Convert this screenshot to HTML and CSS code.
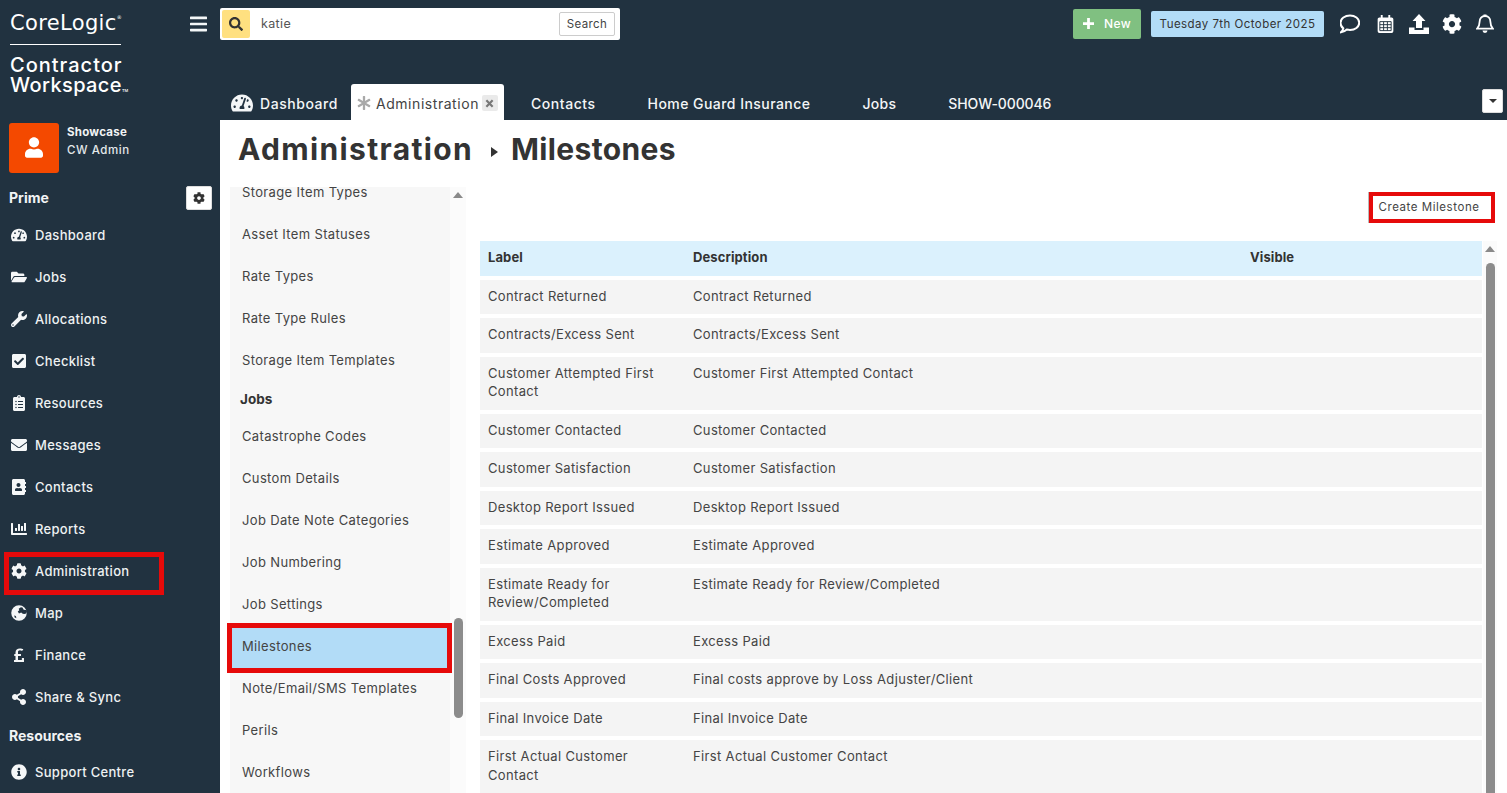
FILE: index.html
```html
<!DOCTYPE html>
<html lang="en">
<head>
<meta charset="utf-8">
<title>Administration - Milestones</title>
<link rel="stylesheet" href="styles.css">
</head>
<body>
<svg class="sprite" aria-hidden="true">
<symbol id="i-bars" viewBox="0 0 448 512"><path d="M16 132h416c8.837 0 16-7.163 16-16V76c0-8.837-7.163-16-16-16H16C7.163 60 0 67.163 0 76v40c0 8.837 7.163 16 16 16zm0 160h416c8.837 0 16-7.163 16-16v-40c0-8.837-7.163-16-16-16H16c-8.837 0-16 7.163-16 16v40c0 8.837 7.163 16 16 16zm0 160h416c8.837 0 16-7.163 16-16v-40c0-8.837-7.163-16-16-16H16c-8.837 0-16 7.163-16 16v40c0 8.837 7.163 16 16 16z"/></symbol>
<symbol id="i-search" viewBox="0 0 512 512"><path d="M505 442.7L405.3 343c-4.5-4.5-10.6-7-17-7H372c27.6-35.3 44-79.7 44-128C416 93.1 322.9 0 208 0S0 93.1 0 208s93.1 208 208 208c48.3 0 92.7-16.4 128-44v16.3c0 6.4 2.5 12.5 7 17l99.7 99.7c9.4 9.4 24.6 9.4 33.9 0l28.3-28.3c9.4-9.4 9.4-24.6.1-34zM208 336c-70.7 0-128-57.2-128-128 0-70.7 57.2-128 128-128 70.7 0 128 57.2 128 128 0 70.7-57.2 128-128 128z"/></symbol>
<symbol id="i-cog" viewBox="0 0 512 512"><path d="M487.4 315.7l-42.6-24.6c4.3-23.2 4.3-47 0-70.2l42.6-24.6c4.9-2.8 7.1-8.6 5.5-14-11.1-35.6-30-67.8-54.7-94.6-3.8-4.1-10-5.1-14.8-2.3L380.8 110c-17.9-15.4-38.5-27.3-60.8-35.1V25.8c0-5.6-3.9-10.5-9.4-11.7-36.7-8.2-74.3-7.8-109.2 0-5.5 1.2-9.4 6.1-9.4 11.7V75c-22.2 7.9-42.8 19.8-60.8 35.1L88.7 85.5c-4.9-2.8-11-1.9-14.8 2.3-24.7 26.7-43.6 58.9-54.7 94.6-1.7 5.4.6 11.2 5.5 14L67.3 221c-4.3 23.2-4.3 47 0 70.2l-42.6 24.6c-4.9 2.8-7.1 8.6-5.5 14 11.1 35.6 30 67.8 54.7 94.6 3.8 4.1 10 5.1 14.8 2.3l42.6-24.6c17.9 15.4 38.5 27.3 60.8 35.1v49.2c0 5.6 3.9 10.5 9.4 11.7 36.7 8.2 74.3 7.8 109.2 0 5.5-1.2 9.4-6.1 9.4-11.7v-49.2c22.2-7.9 42.8-19.8 60.8-35.1l42.6 24.6c4.9 2.8 11 1.9 14.8-2.3 24.7-26.7 43.6-58.9 54.7-94.6 1.5-5.5-.7-11.3-5.6-14.1zM256 336c-44.1 0-80-35.9-80-80s35.9-80 80-80 80 35.9 80 80-35.9 80-80 80z"/></symbol>
<symbol id="i-tach" viewBox="0 0 576 512"><path d="M288 32C128.94 32 0 160.94 0 320c0 52.8 14.25 102.26 39.06 144.8 5.61 9.62 16.3 15.2 27.44 15.2h443c11.14 0 21.83-5.58 27.44-15.2C561.75 422.26 576 372.8 576 320c0-159.06-128.94-288-288-288zm0 64c14.71 0 26.58 10.13 30.32 23.65-1.11 2.26-2.64 4.23-3.45 6.67l-9.22 27.67c-5.13 3.49-10.97 6.01-17.64 6.01-17.67 0-32-14.33-32-32S270.33 96 288 96zM96 384c-17.67 0-32-14.33-32-32s14.33-32 32-32 32 14.33 32 32-14.33 32-32 32zm48-160c-17.67 0-32-14.33-32-32s14.33-32 32-32 32 14.33 32 32-14.33 32-32 32zm246.77-72.41l-61.33 184C343.13 347.33 352 364.54 352 384c0 11.72-3.38 22.55-8.88 32H232.88c-5.5-9.45-8.88-20.28-8.88-32 0-33.94 26.5-61.43 59.9-63.59l61.34-184.01c4.17-12.56 17.73-19.45 30.36-15.17 12.57 4.19 19.35 17.79 15.17 30.36zm14.66 57.2l15.52-46.55c3.47-1.29 7.13-2.23 11.05-2.23 17.67 0 32 14.33 32 32s-14.33 32-32 32c-11.38-.01-20.89-6.28-26.57-15.22zM480 384c-17.67 0-32-14.33-32-32s14.33-32 32-32 32 14.33 32 32-14.33 32-32 32z"/></symbol>
<symbol id="i-folder" viewBox="0 0 576 512"><path d="M572.694 292.093L500.27 416.248A63.997 63.997 0 0 1 444.989 448H45.025c-18.523 0-30.064-20.093-20.731-36.093l72.424-124.155A64 64 0 0 1 152 256h399.964c18.523 0 30.064 20.093 20.73 36.093zM152 224h328v-48c0-26.51-21.49-48-48-48H272l-64-64H48C21.49 64 0 85.49 0 112v278.046l69.077-118.418C86.214 242.25 117.989 224 152 224z"/></symbol>
<symbol id="i-wrench" viewBox="0 0 512 512"><path d="M507.73 109.1c-2.24-9.03-13.54-12.09-20.12-5.51l-74.36 74.36-67.88-11.31-11.31-67.88 74.36-74.36c6.62-6.62 3.43-17.9-5.66-20.16-47.38-11.74-99.55.91-136.58 37.93-39.64 39.64-50.55 97.1-34.05 147.2L18.74 402.76c-24.99 24.99-24.99 65.51 0 90.5 24.99 24.99 65.51 24.99 90.5 0l213.21-213.21c50.12 16.71 107.47 5.68 147.37-34.22 37.07-37.07 49.7-89.32 37.91-136.73zM64 472c-13.25 0-24-10.75-24-24 0-13.26 10.75-24 24-24s24 10.74 24 24c0 13.25-10.75 24-24 24z"/></symbol>
<symbol id="i-check" viewBox="0 0 448 512"><path d="M400 480H48c-26.51 0-48-21.49-48-48V80c0-26.51 21.49-48 48-48h352c26.51 0 48 21.49 48 48v352c0 26.51-21.49 48-48 48zm-204.686-98.059l184-184c6.248-6.248 6.248-16.379 0-22.627l-22.627-22.627c-6.248-6.248-16.379-6.249-22.628 0L184 302.745l-69.059-69.059c-6.248-6.248-16.379-6.248-22.628 0L69.686 256.313c-6.248 6.248-6.248 16.379 0 22.627l104 104c6.249 6.25 16.379 6.25 22.628.001z"/></symbol>
<symbol id="i-clip" viewBox="0 0 384 512"><path d="M336 64h-80c0-35.3-28.7-64-64-64s-64 28.7-64 64H48C21.5 64 0 85.5 0 112v352c0 26.5 21.5 48 48 48h288c26.5 0 48-21.5 48-48V112c0-26.5-21.5-48-48-48zM96 424c-13.3 0-24-10.7-24-24s10.7-24 24-24 24 10.7 24 24-10.7 24-24 24zm0-96c-13.3 0-24-10.7-24-24s10.7-24 24-24 24 10.7 24 24-10.7 24-24 24zm0-96c-13.3 0-24-10.7-24-24s10.7-24 24-24 24 10.7 24 24-10.7 24-24 24zm96-192c13.3 0 24 10.7 24 24s-10.7 24-24 24-24-10.7-24-24 10.7-24 24-24zm128 368c0 4.4-3.6 8-8 8H168c-4.4 0-8-3.6-8-8v-16c0-4.4 3.6-8 8-8h144c4.4 0 8 3.6 8 8v16zm0-96c0 4.4-3.6 8-8 8H168c-4.4 0-8-3.6-8-8v-16c0-4.4 3.6-8 8-8h144c4.4 0 8 3.6 8 8v16zm0-96c0 4.4-3.6 8-8 8H168c-4.4 0-8-3.6-8-8v-16c0-4.4 3.6-8 8-8h144c4.4 0 8 3.6 8 8v16z"/></symbol>
<symbol id="i-env" viewBox="0 0 512 512"><path d="M502.3 190.8c3.9-3.1 9.7-.2 9.7 4.7V400c0 26.5-21.5 48-48 48H48c-26.5 0-48-21.5-48-48V195.6c0-5 5.7-7.8 9.7-4.7 22.4 17.4 52.1 39.5 154.1 113.6 21.1 15.4 56.7 47.8 92.2 47.6 35.7.3 72-32.8 92.3-47.6 102-74.1 131.6-96.3 154-113.7zM256 320c23.2.4 56.6-29.2 73.4-41.4 132.7-96.3 142.8-104.7 173.4-128.7 5.8-4.5 9.2-11.5 9.2-18.9v-19c0-26.5-21.5-48-48-48H48C21.5 64 0 85.5 0 112v19c0 7.4 3.4 14.3 9.2 18.9 30.6 23.9 40.7 32.4 173.4 128.7 16.8 12.2 50.2 41.8 73.4 41.4z"/></symbol>
<symbol id="i-book" viewBox="0 0 448 512"><path d="M436 160c6.6 0 12-5.4 12-12v-40c0-6.6-5.4-12-12-12h-20V48c0-26.5-21.5-48-48-48H48C21.5 0 0 21.5 0 48v416c0 26.5 21.5 48 48 48h320c26.5 0 48-21.5 48-48v-48h20c6.6 0 12-5.4 12-12v-40c0-6.6-5.4-12-12-12h-20v-64h20c6.6 0 12-5.4 12-12v-40c0-6.6-5.4-12-12-12h-20v-64h20zm-228-32c35.3 0 64 28.7 64 64s-28.7 64-64 64-64-28.7-64-64 28.7-64 64-64zm112 236.8c0 10.6-10 19.2-22.4 19.2H118.4C106 384 96 375.4 96 364.8v-19.2c0-31.8 30.1-57.6 67.2-57.6h5c12.3 5.1 25.7 8 39.8 8s27.6-2.9 39.8-8h5c37.1 0 67.2 25.8 67.2 57.6v19.2z"/></symbol>
<symbol id="i-chart" viewBox="0 0 512 512"><path d="M332.8 320h38.4c6.4 0 12.8-6.4 12.8-12.8V172.8c0-6.4-6.4-12.8-12.8-12.8h-38.4c-6.4 0-12.8 6.4-12.8 12.8v134.4c0 6.4 6.4 12.8 12.8 12.8zm96 0h38.4c6.4 0 12.8-6.4 12.8-12.8V76.8c0-6.4-6.4-12.8-12.8-12.8h-38.4c-6.4 0-12.8 6.4-12.8 12.8v230.4c0 6.4 6.4 12.8 12.8 12.8zm-288 0h38.4c6.4 0 12.8-6.4 12.8-12.8v-70.4c0-6.4-6.4-12.8-12.8-12.8h-38.4c-6.4 0-12.8 6.4-12.8 12.8v70.4c0 6.4 6.4 12.8 12.8 12.8zm96 0h38.4c6.4 0 12.8-6.4 12.8-12.8V108.8c0-6.4-6.4-12.8-12.8-12.8h-38.4c-6.4 0-12.8 6.4-12.8 12.8v198.4c0 6.4 6.4 12.8 12.8 12.8zM496 384H64V80c0-8.84-7.16-16-16-16H16C7.16 64 0 71.16 0 80v336c0 17.67 14.33 32 32 32h464c8.84 0 16-7.16 16-16v-32c0-8.84-7.16-16-16-16z"/></symbol>
<symbol id="i-globe" viewBox="0 0 512 512"><path fill-rule="evenodd" d="M256 8a248 248 0 1 0 0 496 248 248 0 0 0 0-496zm60 60l-70 50 20 50-50 40 40 60 70-30 50 40 50 10 60-20c10-30 20-70 0-110l-80-10-40-70zM110 330l50 30 10 60-60-30z"/></symbol>
<symbol id="i-pound" viewBox="0 0 320 512"><path d="M308 352h-45.495c-6.627 0-12 5.373-12 12v50.848H128V288h84c6.627 0 12-5.373 12-12v-40c0-6.627-5.373-12-12-12h-84v-63.556c0-32.266 24.562-57.086 61.792-57.086 23.658 0 45.878 11.505 57.652 18.849 5.151 3.213 11.888 2.051 15.688-2.685l28.493-35.513c4.233-5.276 3.279-13.005-2.119-17.081C273.124 63.475 236.576 48 187.931 48 106.026 48 48 100.755 48 173.208V224H20c-6.627 0-12 5.373-12 12v40c0 6.627 5.373 12 12 12h28v128H12c-6.627 0-12 5.373-12 12v40c0 6.627 5.373 12 12 12h296c6.627 0 12-5.373 12-12V364c0-6.627-5.373-12-12-12z"/></symbol>
<symbol id="i-share" viewBox="0 0 448 512"><path d="M352 320c-22.608 0-43.387 7.819-59.79 20.895l-102.486-64.054a96.551 96.551 0 0 0 0-41.683l102.486-64.054C308.613 184.181 329.392 192 352 192c53.019 0 96-42.981 96-96S405.019 0 352 0s-96 42.981-96 96c0 7.158.79 14.13 2.276 20.841L155.79 180.895C139.387 167.819 118.608 160 96 160c-53.019 0-96 42.981-96 96s42.981 96 96 96c22.608 0 43.387-7.819 59.79-20.895l102.486 64.054A96.301 96.301 0 0 0 256 416c0 53.019 42.981 96 96 96s96-42.981 96-96-42.981-96-96-96z"/></symbol>
<symbol id="i-info" viewBox="0 0 512 512"><path d="M256 8C119.043 8 8 119.083 8 256c0 136.997 111.043 248 248 248s248-111.003 248-248C504 119.083 392.957 8 256 8zm0 110c23.196 0 42 18.804 42 42s-18.804 42-42 42-42-18.804-42-42 18.804-42 42-42zm56 254c0 6.627-5.373 12-12 12h-88c-6.627 0-12-5.373-12-12v-24c0-6.627 5.373-12 12-12h12v-64h-12c-6.627 0-12-5.373-12-12v-24c0-6.627 5.373-12 12-12h64c6.627 0 12 5.373 12 12v100h12c6.627 0 12 5.373 12 12v24z"/></symbol>
<symbol id="i-user" viewBox="0 0 448 512"><path d="M224 256c70.7 0 128-57.3 128-128S294.7 0 224 0 96 57.3 96 128s57.3 128 128 128zm89.6 32h-16.7c-22.2 10.2-46.9 16-72.9 16s-50.6-5.8-72.9-16h-16.7C60.2 288 0 348.2 0 422.4V464c0 26.5 21.5 48 48 48h352c26.5 0 48-21.5 48-48v-41.6c0-74.2-60.2-134.4-134.4-134.4z"/></symbol>
<symbol id="i-ast" viewBox="0 0 512 512"><path d="M478.21 334.093L336 256l142.21-78.093c11.795-6.477 15.961-21.384 9.232-33.037l-19.48-33.741c-6.728-11.653-21.72-15.499-33.227-8.523L296 186.718l3.475-162.204C299.763 11.061 288.937 0 275.48 0h-38.96c-13.456 0-24.283 11.061-23.994 24.514L216 186.718 77.265 102.607c-11.506-6.976-26.499-3.13-33.227 8.523l-19.48 33.741c-6.728 11.653-2.562 26.56 9.233 33.037L176 256 33.79 334.093c-11.795 6.477-15.961 21.384-9.232 33.037l19.48 33.741c6.728 11.653 21.721 15.499 33.227 8.523L216 325.282l-3.475 162.204C212.237 500.939 223.064 512 236.52 512h38.961c13.456 0 24.283-11.061 23.995-24.514L296 325.282l138.735 84.111c11.506 6.976 26.499 3.13 33.227-8.523l19.48-33.741c6.728-11.653 2.563-26.559-9.232-33.036z"/></symbol>
</svg>

<div class="app">
  <aside class="sidebar">
    <div class="brand">
      <div class="brand-core">CoreLogic<sup class="brand-reg">&#174;</sup></div>
      <div class="brand-rule"></div>
      <div class="brand-product">Contractor</div>
      <div class="brand-product brand-second">Workspace<span class="brand-tm">TM</span></div>
    </div>
    <div class="user">
      <div class="avatar"><svg class="avatar-icon"><use href="#i-user"/></svg></div>
      <div class="user-text">
        <div class="user-org">Showcase</div>
        <div class="user-role">CW Admin</div>
      </div>
    </div>
    <div class="side-head">
      <span>Prime</span>
      <button class="gear-btn"><svg class="gear-icon"><use href="#i-cog"/></svg></button>
    </div>
    <nav class="nav">
      <a class="nav-item"><svg class="nav-icon"><use href="#i-tach"/></svg>Dashboard</a>
      <a class="nav-item"><svg class="nav-icon"><use href="#i-folder"/></svg>Jobs</a>
      <a class="nav-item"><svg class="nav-icon"><use href="#i-wrench"/></svg>Allocations</a>
      <a class="nav-item"><svg class="nav-icon"><use href="#i-check"/></svg>Checklist</a>
      <a class="nav-item"><svg class="nav-icon"><use href="#i-clip"/></svg>Resources</a>
      <a class="nav-item"><svg class="nav-icon"><use href="#i-env"/></svg>Messages</a>
      <a class="nav-item"><svg class="nav-icon"><use href="#i-book"/></svg>Contacts</a>
      <a class="nav-item"><svg class="nav-icon"><use href="#i-chart"/></svg>Reports</a>
      <a class="nav-item nav-marked"><svg class="nav-icon"><use href="#i-cog"/></svg>Administration</a>
      <a class="nav-item"><svg class="nav-icon"><use href="#i-globe"/></svg>Map</a>
      <a class="nav-item"><svg class="nav-icon"><use href="#i-pound"/></svg>Finance</a>
      <a class="nav-item"><svg class="nav-icon"><use href="#i-share"/></svg>Share &amp; Sync</a>
    </nav>
    <div class="side-head side-head-res"><span>Resources</span></div>
    <a class="nav-item"><svg class="nav-icon"><use href="#i-info"/></svg>Support Centre</a>
  </aside>

  <main class="main">
    <header class="top">
      <div class="top-row">
        <svg class="burger"><use href="#i-bars"/></svg>
        <div class="search">
          <span class="search-icon"><svg class="search-svg"><use href="#i-search"/></svg></span>
          <span class="search-value">katie</span>
          <button class="search-btn">Search</button>
        </div>
        <div class="top-right">
          <button class="new-btn"><svg class="new-plus" viewBox="0 0 12 12"><path d="M4.500 0h3v4.500H12v3H7.500V12h-3V7.500H0v-3h4.500z"/></svg>New</button>
          <div class="date">Tuesday 7th October 2025</div>
          <div class="top-icons">
            <svg class="ti ti-comment" viewBox="1 1 20 18"><path d="M11 1.500c5 0 9.200 3 9.200 7.300S16 16 11 16c-1.100 0-2.200-.2-3.200-.4-1.400 1.300-3.500 2.500-5.800 2.700 1-.9 2-2.300 2.300-3.900C2.700 13.100 1.500 11.100 1.500 8.800 1.500 4.500 6 1.500 11 1.500z"/></svg>
            <svg class="ti ti-cal" viewBox="0 0 18 20"><path d="M2.500 3h13A1.800 1.800 0 0 1 17.300 4.800v13a1.800 1.800 0 0 1-1.800 1.800h-13A1.800 1.800 0 0 1 .7 17.800v-13A1.800 1.800 0 0 1 2.500 3z"/><path d="M4 .5h2v4H4zM12 .5h2v4h-2z"/><path class="cal-grid" d="M3 7.500h12v9.500H3zM3 10.700h12M3 13.900h12M7 7.500v9.500M11 7.500v9.500"/></svg>
            <svg class="ti ti-up" viewBox="0 0 20 20"><path d="M10 0l6.500 7H13v7H7V7H3.500z"/><path d="M0 13.500h5.500V16h9v-2.500H20V20H0z"/></svg>
            <svg class="ti ti-cog"><use href="#i-cog"/></svg>
            <svg class="ti ti-bell" viewBox="0 0 18 20"><path d="M9 2c3.300 0 5.400 2.400 5.400 5.700 0 4.300 1.400 5.500 2.600 7H1c1.200-1.500 2.600-2.700 2.600-7C3.600 4.400 5.700 2 9 2z"/><path class="bell-fill" d="M7.500 0.500h3v2h-3zM6.500 16.500h5a2.500 2.500 0 0 1-5 0z"/></svg>
          </div>
        </div>
      </div>
      <div class="tabs">
        <a class="tab tab-first"><svg class="tab-icon"><use href="#i-tach"/></svg>Dashboard</a>
        <a class="tab tab-active"><svg class="tab-ast"><use href="#i-ast"/></svg>Administration<span class="tab-close"><svg class="close-x" viewBox="0 0 10 10"><path d="M1.500 1.500l7 7M8.500 1.500l-7 7"/></svg></span></a>
        <a class="tab">Contacts</a>
        <a class="tab tab-long">Home Guard Insurance</a>
        <a class="tab tab-jobs">Jobs</a>
        <a class="tab tab-code">SHOW-000046</a>
        <button class="tabs-more"><span class="caret"></span></button>
      </div>
    </header>

    <section class="page">
      <h1 class="title"><span class="title-admin">Administration</span><span class="crumb"></span><span>Milestones</span></h1>
      <div class="content">
        <div class="side-panel">
          <div class="side-list">
            <div class="list-scroll">
              <a class="li">Storage Item Types</a>
              <a class="li">Asset Item Statuses</a>
              <a class="li">Rate Types</a>
              <a class="li">Rate Type Rules</a>
              <a class="li">Storage Item Templates</a>
              <div class="li-head">Jobs</div>
              <a class="li">Catastrophe Codes</a>
              <a class="li">Custom Details</a>
              <a class="li">Job Date Note Categories</a>
              <a class="li">Job Numbering</a>
              <a class="li">Job Settings</a>
              <a class="li li-active">Milestones</a>
              <a class="li">Note/Email/SMS Templates</a>
              <a class="li">Perils</a>
              <a class="li">Workflows</a>
            </div>
          </div>
          <div class="track">
            <span class="arrow-up"></span>
            <span class="thumb thumb-list"></span>
          </div>
        </div>
        <div class="detail">
          <div class="actions"><button class="create-btn">Create Milestone</button></div>
          <div class="table-wrap">
            <table class="grid">
              <colgroup><col class="col-label"><col class="col-desc"><col></colgroup>
              <thead>
                <tr><th>Label</th><th>Description</th><th>Visible</th></tr>
              </thead>
              <tbody>
                <tr><td>Contract Returned</td><td>Contract Returned</td><td></td></tr>
                <tr><td>Contracts/Excess Sent</td><td>Contracts/Excess Sent</td><td></td></tr>
                <tr><td>Customer Attempted First Contact</td><td>Customer First Attempted Contact</td><td></td></tr>
                <tr><td>Customer Contacted</td><td>Customer Contacted</td><td></td></tr>
                <tr><td>Customer Satisfaction</td><td>Customer Satisfaction</td><td></td></tr>
                <tr><td>Desktop Report Issued</td><td>Desktop Report Issued</td><td></td></tr>
                <tr><td>Estimate Approved</td><td>Estimate Approved</td><td></td></tr>
                <tr><td>Estimate Ready for Review/Completed</td><td>Estimate Ready for Review/Completed</td><td></td></tr>
                <tr><td>Excess Paid</td><td>Excess Paid</td><td></td></tr>
                <tr><td>Final Costs Approved</td><td>Final costs approve by Loss Adjuster/Client</td><td></td></tr>
                <tr><td>Final Invoice Date</td><td>Final Invoice Date</td><td></td></tr>
                <tr><td>First Actual Customer Contact</td><td>First Actual Customer Contact</td><td></td></tr>
              </tbody>
            </table>
            <div class="track track-table">
              <span class="arrow-up"></span>
              <span class="thumb thumb-table"></span>
            </div>
          </div>
        </div>
      </div>
    </section>
  </main>
</div>
</body>
</html>
```
FILE: styles.css
```css
*, *::before, *::after { box-sizing: border-box; }
html, body { height: 100%; }
body {
  margin: 0;
  overflow: hidden;
  font-family: Inter, "Liberation Sans", sans-serif;
  font-size: 13px;
  letter-spacing: 0.35px;
  color: #3a3a3a;
  background: #213240;
}
.sprite { display: none; }
button { font: inherit; letter-spacing: inherit; cursor: pointer; }
svg { fill: currentColor; display: block; }

.app { display: flex; height: 793px; overflow: hidden; }

/* sidebar */
.sidebar {
  width: 220px;
  flex: none;
  display: flex;
  flex-direction: column;
  color: #f2f4f5;
  background: #213240;
}
.brand { height: 124px; padding: 11px 0 0 10px; color: #fff; }
.brand-core {
  font-size: 21px;
  line-height: 24px;
  letter-spacing: 0.35px;
  font-family: "DejaVu Sans", sans-serif;
  font-weight: 400;
  white-space: nowrap;
}
.brand-reg { font-size: 5px; vertical-align: top; line-height: 12px; }
.brand-rule { width: 111px; height: 1px; background: #fff; margin-top: 9px; }
.brand-product {
  font-size: 20px;
  line-height: 20px;
  font-weight: 500;
  letter-spacing: 1px;
  margin-top: 10px;
}
.brand-second { margin-top: 0; letter-spacing: 0.4px; }
.brand-tm { font-size: 4px; letter-spacing: 0; }
.user { display: flex; height: 50px; padding-left: 9px; gap: 8px; }
.avatar {
  width: 50px;
  height: 50px;
  background: #f44900;
  border-radius: 3px;
  display: flex;
  align-items: center;
  justify-content: center;
}
.avatar-icon { width: 18px; height: 21px; color: #fff; }
.user-text { font-size: 11.5px; letter-spacing: 0.55px; }
.user-org { font-weight: 700; line-height: 18px; letter-spacing: 0.25px; }
.user-role { line-height: 18px; font-weight: 500; color: #e4e8ea; }
.side-head {
  margin-top: 13px;
  height: 24px;
  padding: 0 8px 0 9px;
  display: flex;
  align-items: center;
  justify-content: space-between;
  font-size: 14px;
  font-weight: 700;
  letter-spacing: 0;
  color: #f2f4f5;
}
.gear-btn {
  width: 26px;
  height: 24px;
  border: 1px solid #ddd;
  border-radius: 2px;
  background: #fff;
  padding: 0;
  display: flex;
  align-items: center;
  justify-content: center;
  color: #333;
}
.gear-icon { width: 12px; height: 12px; }
.nav { margin-top: 4px; display: flex; flex-direction: column; }
.nav-item {
  position: relative;
  height: 42px;
  display: flex;
  align-items: center;
  gap: 8px;
  padding-left: 11px;
  font-weight: 500;
  color: #eef1f2;
  white-space: nowrap;
  font-size: 13px;
  letter-spacing: 0.3px;
}
.nav-icon { width: 16px; height: 16px; flex: none; color: #f5f7f8; }
.nav-marked::after {
  content: "";
  position: absolute;
  left: 4px;
  top: 2px;
  width: 160px;
  height: 43px;
  border: 5px solid #e60a0a;
}
.side-head-res { margin-top: 6px; margin-bottom: 4px; }

/* main */
.main { flex: 1; min-width: 0; display: flex; flex-direction: column; }
.top { height: 120px; flex: none; color: #fff; display: flex; flex-direction: column; }
.top-row {
  height: 48px;
  display: flex;
  align-items: flex-start;
  margin-left: -30px;
  padding: 8px 13px 0 0;
}
.burger { width: 17px; height: 20px; margin: 6px 13px 0 0; color: #f4f7f8; flex: none; }
.search {
  width: 400px;
  height: 32px;
  background: #fff;
  border-radius: 2px;
  display: flex;
  align-items: center;
  padding: 2px 5px 2px 2px;
  color: #555;
}
.search-icon {
  width: 28px;
  height: 28px;
  background: #ffe080;
  border-radius: 2px;
  display: flex;
  align-items: center;
  justify-content: center;
  color: #333;
}
.search-svg { width: 14px; height: 14px; }
.search-value { flex: 1; padding: 0 0 1px 11px; font-size: 12.5px; }
.search-btn {
  height: 24px;
  width: 56px;
  background: #fff;
  border: 1px solid #ccc;
  border-radius: 2px;
  color: #444;
  padding: 0;
  font-size: 11.5px;
}
.top-right { margin-left: auto; display: flex; align-items: center; height: 32px; }
.new-btn {
  width: 68px;
  height: 30px;
  background: #80c081;
  border: 0;
  border-radius: 2px;
  color: #fff;
  font-weight: 500;
  font-size: 12px;
  display: flex;
  align-items: center;
  justify-content: center;
  gap: 10px;
  padding: 0 0 1px;
}
.new-plus { width: 11px; height: 11px; flex: none; }
.date {
  margin-left: 10px;
  width: 173px;
  height: 26px;
  background: #b2dcf7;
  color: #333;
  border-radius: 2px;
  font-size: 11.5px;
  letter-spacing: 0.45px;
  line-height: 26px;
  text-align: center;
  white-space: nowrap;
}
.top-icons { margin-left: 16px; display: flex; align-items: center; }
.ti { height: 20px; flex: none; color: #fff; }
.ti-comment { width: 20px; fill: none; stroke: #fff; stroke-width: 2; }
.ti-cal { width: 17px; margin-left: 17px; }
.cal-grid { fill: none; stroke: #213240; stroke-width: 1; }
.ti-up { width: 20px; margin-left: 15px; }
.ti-cog { width: 20px; margin-left: 13px; }
.ti-bell { width: 18px; margin-left: 14px; fill: none; stroke: #fff; stroke-width: 1.8; }
.bell-fill { fill: #fff; stroke: none; }

.tabs {
  margin-top: 36px;
  height: 36px;
  display: flex;
  align-items: stretch;
  position: relative;
  font-size: 14px;
  font-weight: 500;
  letter-spacing: 0.55px;
}
.tab {
  display: flex;
  align-items: center;
  padding: 2px 26px 0;
  color: #f4f6f7;
  white-space: nowrap;
}
.tab-first { padding: 2px 13px 0 11px; gap: 7px; }
.tab-icon { width: 22px; height: 20px; flex: none; margin-top: -1px; }
.tab-active {
  background: #fff;
  color: #444;
  font-weight: 400;
  border-radius: 3px 3px 0 0;
  padding: 2px 7px 0 6px;
  margin-right: 1px;
  width: 153px;
}
.tab-long { letter-spacing: 0.45px; }
.tab-jobs { letter-spacing: 0.3px; }
.tab-code { letter-spacing: -0.1px; }
.tab-ast { width: 14px; height: 14px; color: #a9a9a9; margin-right: 5px; flex: none; }
.tab-close {
  margin-left: 3px;
  width: 16px;
  height: 16px;
  background: #eaeaea;
  border-radius: 2px;
  display: flex;
  align-items: center;
  justify-content: center;
  flex: none;
}
.close-x { width: 9px; height: 9px; fill: none; stroke: #777; stroke-width: 2.4; }
.tabs-more {
  position: absolute;
  left: 1262px;
  top: 5px;
  width: 21px;
  height: 24px;
  background: #fff;
  border: 1px solid #ddd;
  border-radius: 2px;
  padding: 0;
  display: flex;
  align-items: center;
  justify-content: center;
}
.caret {
  width: 0;
  height: 0;
  border-left: 4px solid transparent;
  border-right: 4px solid transparent;
  border-top: 4px solid #333;
}

.page { flex: 1; min-height: 0; background: #fff; display: flex; flex-direction: column; }
.title {
  margin: 0;
  height: 67px;
  flex: none;
  padding: 0 0 10px 18px;
  display: flex;
  align-items: center;
  font-size: 30px;
  font-weight: 700;
  letter-spacing: 0.35px;
  color: #333;
}
.title-admin { letter-spacing: 1.35px; }
.crumb {
  width: 0;
  height: 0;
  margin: 6px 13px 0 18px;
  border-top: 5px solid transparent;
  border-bottom: 5px solid transparent;
  border-left: 7px solid #333;
}
.content { flex: 1; min-height: 0; display: flex; overflow: hidden; }
.side-panel { width: 236px; margin-left: 10px; flex: none; display: flex; }
.side-list { width: 220px; background: #f7f7f7; }
.list-scroll { margin-top: -16px; clip-path: inset(16px -6px 0 -6px); }
.li {
  display: flex;
  align-items: center;
  height: 42px;
  padding-left: 12px;
  color: #444;
  white-space: nowrap;
}
.li-head {
  height: 34px;
  padding: 1px 0 0 10px;
  display: flex;
  align-items: center;
  font-weight: 700;
  font-size: 13.5px;
  letter-spacing: 0;
  color: #333;
}
.li-active {
  position: relative;
  height: 40px;
  margin: 3px 3px -1px 2px;
  padding: 0 0 4px 10px;
  background: #b2dcf7;
  outline: 5px solid #e60a0a;
}
.track {
  width: 16px;
  background: #fbfbfb;
  display: flex;
  flex-direction: column;
  align-items: center;
  flex: none;
}
.arrow-up {
  margin-top: 5px;
  width: 0;
  height: 0;
  border-left: 5px solid transparent;
  border-right: 5px solid transparent;
  border-bottom: 6px solid #8a8a8a;
  flex: none;
}
.thumb { width: 9px; background: #8c8c8c; border-radius: 5px; flex: none; }
.thumb-list { margin-top: 420px; height: 100px; }
.thumb-table { margin-top: 11px; height: 560px; }

.detail { flex: 1; min-width: 0; margin-left: 14px; display: flex; flex-direction: column; }
.actions { height: 54px; flex: none; display: flex; justify-content: flex-end; padding: 5px 12px 0 0; }
.create-btn {
  width: 126px;
  height: 31px;
  background: #fff;
  border: 4px solid #e60a0a;
  box-shadow: -1px 0 0 #bbb;
  color: #444;
  padding: 0 6px 2px 0;
  font-size: 11.5px;
  letter-spacing: 0.55px;
  white-space: nowrap;
}
.table-wrap { display: flex; align-items: flex-start; flex: 1; min-height: 0; }
.grid {
  width: 1002px;
  flex: none;
  table-layout: fixed;
  border-collapse: separate;
  border-spacing: 0 4px;
  margin-top: -4.25px;
}
.col-label { width: 205px; }
.col-desc { width: 557px; }
.grid th {
  height: 35px;
  padding: 0 8px 3px;
  text-align: left;
  background: #dbf1fd;
  color: #333;
  font-weight: 700;
  font-size: 13px;
  letter-spacing: 0.1px;
}
.grid td {
  padding: 7px 8px 9px;
  line-height: 18.5px;
  vertical-align: top;
  background: #f4f4f4;
  color: #444;
}
.track-table { width: 14px; margin-left: 1px; height: 600px; }
```
